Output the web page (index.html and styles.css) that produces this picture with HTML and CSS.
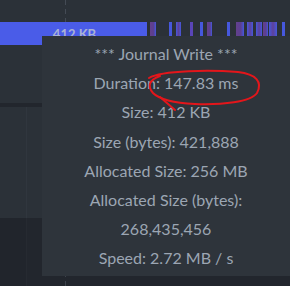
FILE: index.html
```html
<!DOCTYPE html>
<html>
<head>
<meta charset="utf-8">
<link rel="stylesheet" href="styles.css">
</head>
<body>
<div class="timeline">
  <div class="ruler"><div class="grid-line"></div></div>
  <div class="track">
    <div class="write-bar"><span class="bar-label">412 KB</span></div>
    <div class="strip">
      <span class="tick purple" style="left:3px;width:6px"></span>
      <span class="tick" style="left:22px;width:3px"></span>
      <span class="tick mixed" style="left:29px;width:5px"></span>
      <span class="tick violet" style="left:43px;width:3px"></span>
      <span class="tick" style="left:53px;width:3px"></span>
      <span class="tick purple" style="left:60px;width:5px"></span>
      <span class="tick" style="left:80px;width:3px"></span>
      <span class="tick purple" style="left:89px;width:8px"></span>
      <span class="tick mixed" style="left:100px;width:6px"></span>
      <span class="tick mixed" style="left:109px;width:6px"></span>
      <span class="tick purple" style="left:116px;width:5px"></span>
      <span class="tick mixed" style="left:122px;width:8px"></span>
      <span class="tick" style="left:135px;width:3px"></span>
    </div>
  </div>
  <div class="gap"></div>
  <div class="separator"></div>
  <div class="lane"><div class="lane-label"></div></div>
  <div class="lower"><div class="lane-label dark"></div><div class="lower-grid"></div></div>

  <div class="tooltip">
    <div class="tip-line">*** Journal Write ***</div>
    <div class="tip-line">Duration: 147.83 ms</div>
    <div class="tip-line">Size: 412 KB</div>
    <div class="tip-line">Size (bytes): 421,888</div>
    <div class="tip-line">Allocated Size: 256 MB</div>
    <div class="tip-line">Allocated Size (bytes):</div>
    <div class="tip-line">268,435,456</div>
    <div class="tip-line">Speed: 2.72 MB / s</div>
  </div>

  <svg class="annotation" width="290" height="286" viewBox="0 0 290 286">
    <path d="M149,78 C162,70 212,70 238,72 C256,74 263,82 257,93 C251,102 222,105 195,104 C175,103 160,100 153,93 C147,86 149,80 160,76" fill="none" stroke="#e3161b" stroke-width="2" stroke-linecap="round"/>
    <path d="M160,97 L175,110" fill="none" stroke="#e3161b" stroke-width="2" stroke-linecap="round"/>
  </svg>
</div>
</body>
</html>
```
FILE: styles.css
```css
html, body {
  margin: 0;
  padding: 0;
}
body {
  width: 290px;
  height: 286px;
  overflow: hidden;
  background: #2b3138;
  font-family: Lato, "Open Sans", sans-serif;
}
.timeline {
  position: relative;
  width: 290px;
  height: 286px;
  display: flex;
  flex-direction: column;
}
.ruler {
  height: 22px;
  position: relative;
}
.grid-line {
  margin-left: 65px;
  width: 1px;
  height: 22px;
  background: repeating-linear-gradient(to bottom, #444b55 0 5px, transparent 5px 9px);
}
.track {
  height: 23px;
  display: flex;
}
.write-bar {
  width: 147px;
  height: 23px;
  background: #4a5ce8;
  display: flex;
  align-items: center;
  justify-content: center;
}
.bar-label {
  color: #aab3d4;
  font-size: 13px;
  font-weight: 700;
  padding-left: 2px;
}
.strip {
  position: relative;
  flex: 1;
  height: 14px;
}
.tick {
  position: absolute;
  top: 0;
  height: 14px;
  background: #4658dd;
}
.tick.purple {
  background: linear-gradient(to right, #63408c, #5b3f92 60%, #4658dd);
}
.tick.violet {
  background: #5a45b8;
}
.tick.mixed {
  background: linear-gradient(to right, #4658dd, #5e419a 50%, #4658dd);
}
.gap {
  height: 58px;
}
.separator {
  height: 4px;
  background: #22262d;
}
.lane {
  height: 111px;
  display: flex;
}
.lane-label {
  width: 26px;
  border-right: 1px solid #30363e;
}
.lower {
  height: 68px;
  background: #22262d;
  display: flex;
}
.lane-label.dark {
  background: #21252c;
  border-right: 1px solid #262a31;
}
.lower-grid {
  margin-left: 38px;
  width: 1px;
  background: repeating-linear-gradient(to bottom, #3c424b 0 5px, transparent 5px 9px);
}
.tooltip {
  position: absolute;
  left: 42px;
  top: 36px;
  width: 248px;
  height: 240px;
  background: #2e343b;
  padding-top: 3px;
  box-sizing: border-box;
  text-align: center;
  color: #9ca6b3;
  font-size: 16px;
  line-height: 29.2px;
}
.annotation {
  position: absolute;
  left: 0;
  top: 0;
  pointer-events: none;
}
```
